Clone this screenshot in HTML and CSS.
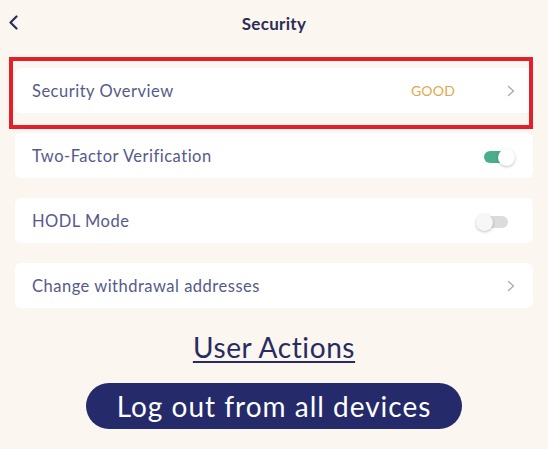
FILE: index.html
```html
<!DOCTYPE html>
<html lang="en">
<head>
  <meta charset="UTF-8" />
  <meta name="viewport" content="width=device-width, initial-scale=1.0" />
  <title>Security</title>
  <link rel="stylesheet" href="styles.css">
</head>
<body>
  <header class="top-bar">
    <button class="back-btn" aria-label="Back">
      <svg width="11" height="15" viewBox="0 0 11 15">
        <path d="M8.5 1.5 L2.5 7.5 L8.5 13.5" fill="none" stroke="#2b2d55" stroke-width="2.2" stroke-linecap="round" stroke-linejoin="round"/>
      </svg>
    </button>
    <h1 class="title">Security</h1>
    <span></span>
  </header>

  <!-- Settings list -->
  <div class="settings-list">
    <div class="setting-row highlighted">
      <span class="label">Security Overview</span>
      <span class="status">GOOD</span>
      <svg class="chevron" width="8" height="12" viewBox="0 0 8 12">
        <path d="M1.5 1.5 L6.5 6 L1.5 10.5" fill="none" stroke="#a9abbd" stroke-width="1.4" stroke-linecap="round" stroke-linejoin="round"/>
      </svg>
    </div>

    <div class="setting-row">
      <span class="label">Two-Factor Verification</span>
      <span class="toggle on"><span class="track"></span><span class="knob"></span></span>
    </div>

    <div class="setting-row">
      <span class="label">HODL Mode</span>
      <span class="toggle"><span class="track"></span><span class="knob"></span></span>
    </div>

    <div class="setting-row">
      <span class="label">Change withdrawal addresses</span>
      <svg class="chevron" width="8" height="12" viewBox="0 0 8 12">
        <path d="M1.5 1.5 L6.5 6 L1.5 10.5" fill="none" stroke="#a9abbd" stroke-width="1.4" stroke-linecap="round" stroke-linejoin="round"/>
      </svg>
    </div>
  </div>

  <div class="user-actions">
    <a href="#" class="actions-link">User Actions</a>
    <button class="logout-btn">Log out from all devices</button>
  </div>
</body>
</html>
```

FILE: styles.css
```css
body {
  font-family: "Lato", "Noto Sans", sans-serif;
  background-color: #fbf6f0;
  color: #565a8a;
  margin: 0;
  padding: 0;
}

.top-bar {
  display: grid;
  grid-template-columns: 1fr auto 1fr;
  align-items: center;
  height: 44px;
}

.back-btn {
  justify-self: start;
  background: none;
  border: none;
  padding: 0 0 0 8px;
  display: flex;
  cursor: pointer;
}

.title {
  margin: 0;
  font-size: 17px;
  font-weight: 700;
  letter-spacing: 0.3px;
  color: #2b2d55;
  padding-top: 2px;
}

.settings-list {
  display: flex;
  flex-direction: column;
  gap: 20px;
  padding: 24px 15px 0;
}

.setting-row {
  position: relative;
  display: flex;
  align-items: center;
  height: 45px;
  padding: 0 18px 0 17px;
  background: #fff;
  border-radius: 6px;
  font-size: 16.5px;
  letter-spacing: 0.5px;
}

.setting-row .label {
  flex: 1;
}

.highlighted::after {
  content: "";
  position: absolute;
  top: -11px;
  left: -6px;
  right: 0;
  bottom: -16px;
  border: 4px solid #e3202a;
}

.status {
  color: #e3a84b;
  font-size: 14px;
  letter-spacing: 0.2px;
  margin-right: 52px;
}

.toggle {
  position: relative;
  width: 39px;
  height: 17px;
  margin-top: 3px;
}

.toggle .track {
  position: absolute;
  left: 8px;
  top: 2.5px;
  width: 24px;
  height: 12px;
  border-radius: 6px;
  background: #dcdcdc;
}

.toggle .knob {
  position: absolute;
  left: 0;
  top: 0;
  width: 17px;
  height: 17px;
  border-radius: 50%;
  background: #f7f7f7;
  box-shadow: 0 1px 3px rgba(0,0,0,0.25);
}

.toggle.on .track {
  background: #4aae8b;
}

.toggle.on .knob {
  left: 22px;
  background: #fff;
}

.user-actions {
  display: flex;
  flex-direction: column;
  align-items: center;
  padding-top: 22px;
}

.actions-link {
  font-size: 28px;
  letter-spacing: 0.6px;
  color: #272b62;
  text-decoration: underline;
  text-decoration-thickness: 2px;
  text-underline-offset: 3px;
}

.logout-btn {
  margin-top: 19px;
  width: 376px;
  height: 46px;
  border: none;
  border-radius: 23px;
  background-color: #252a6b;
  color: #fff;
  font-family: inherit;
  font-size: 28px;
  letter-spacing: 1px;
  cursor: pointer;
}
```
